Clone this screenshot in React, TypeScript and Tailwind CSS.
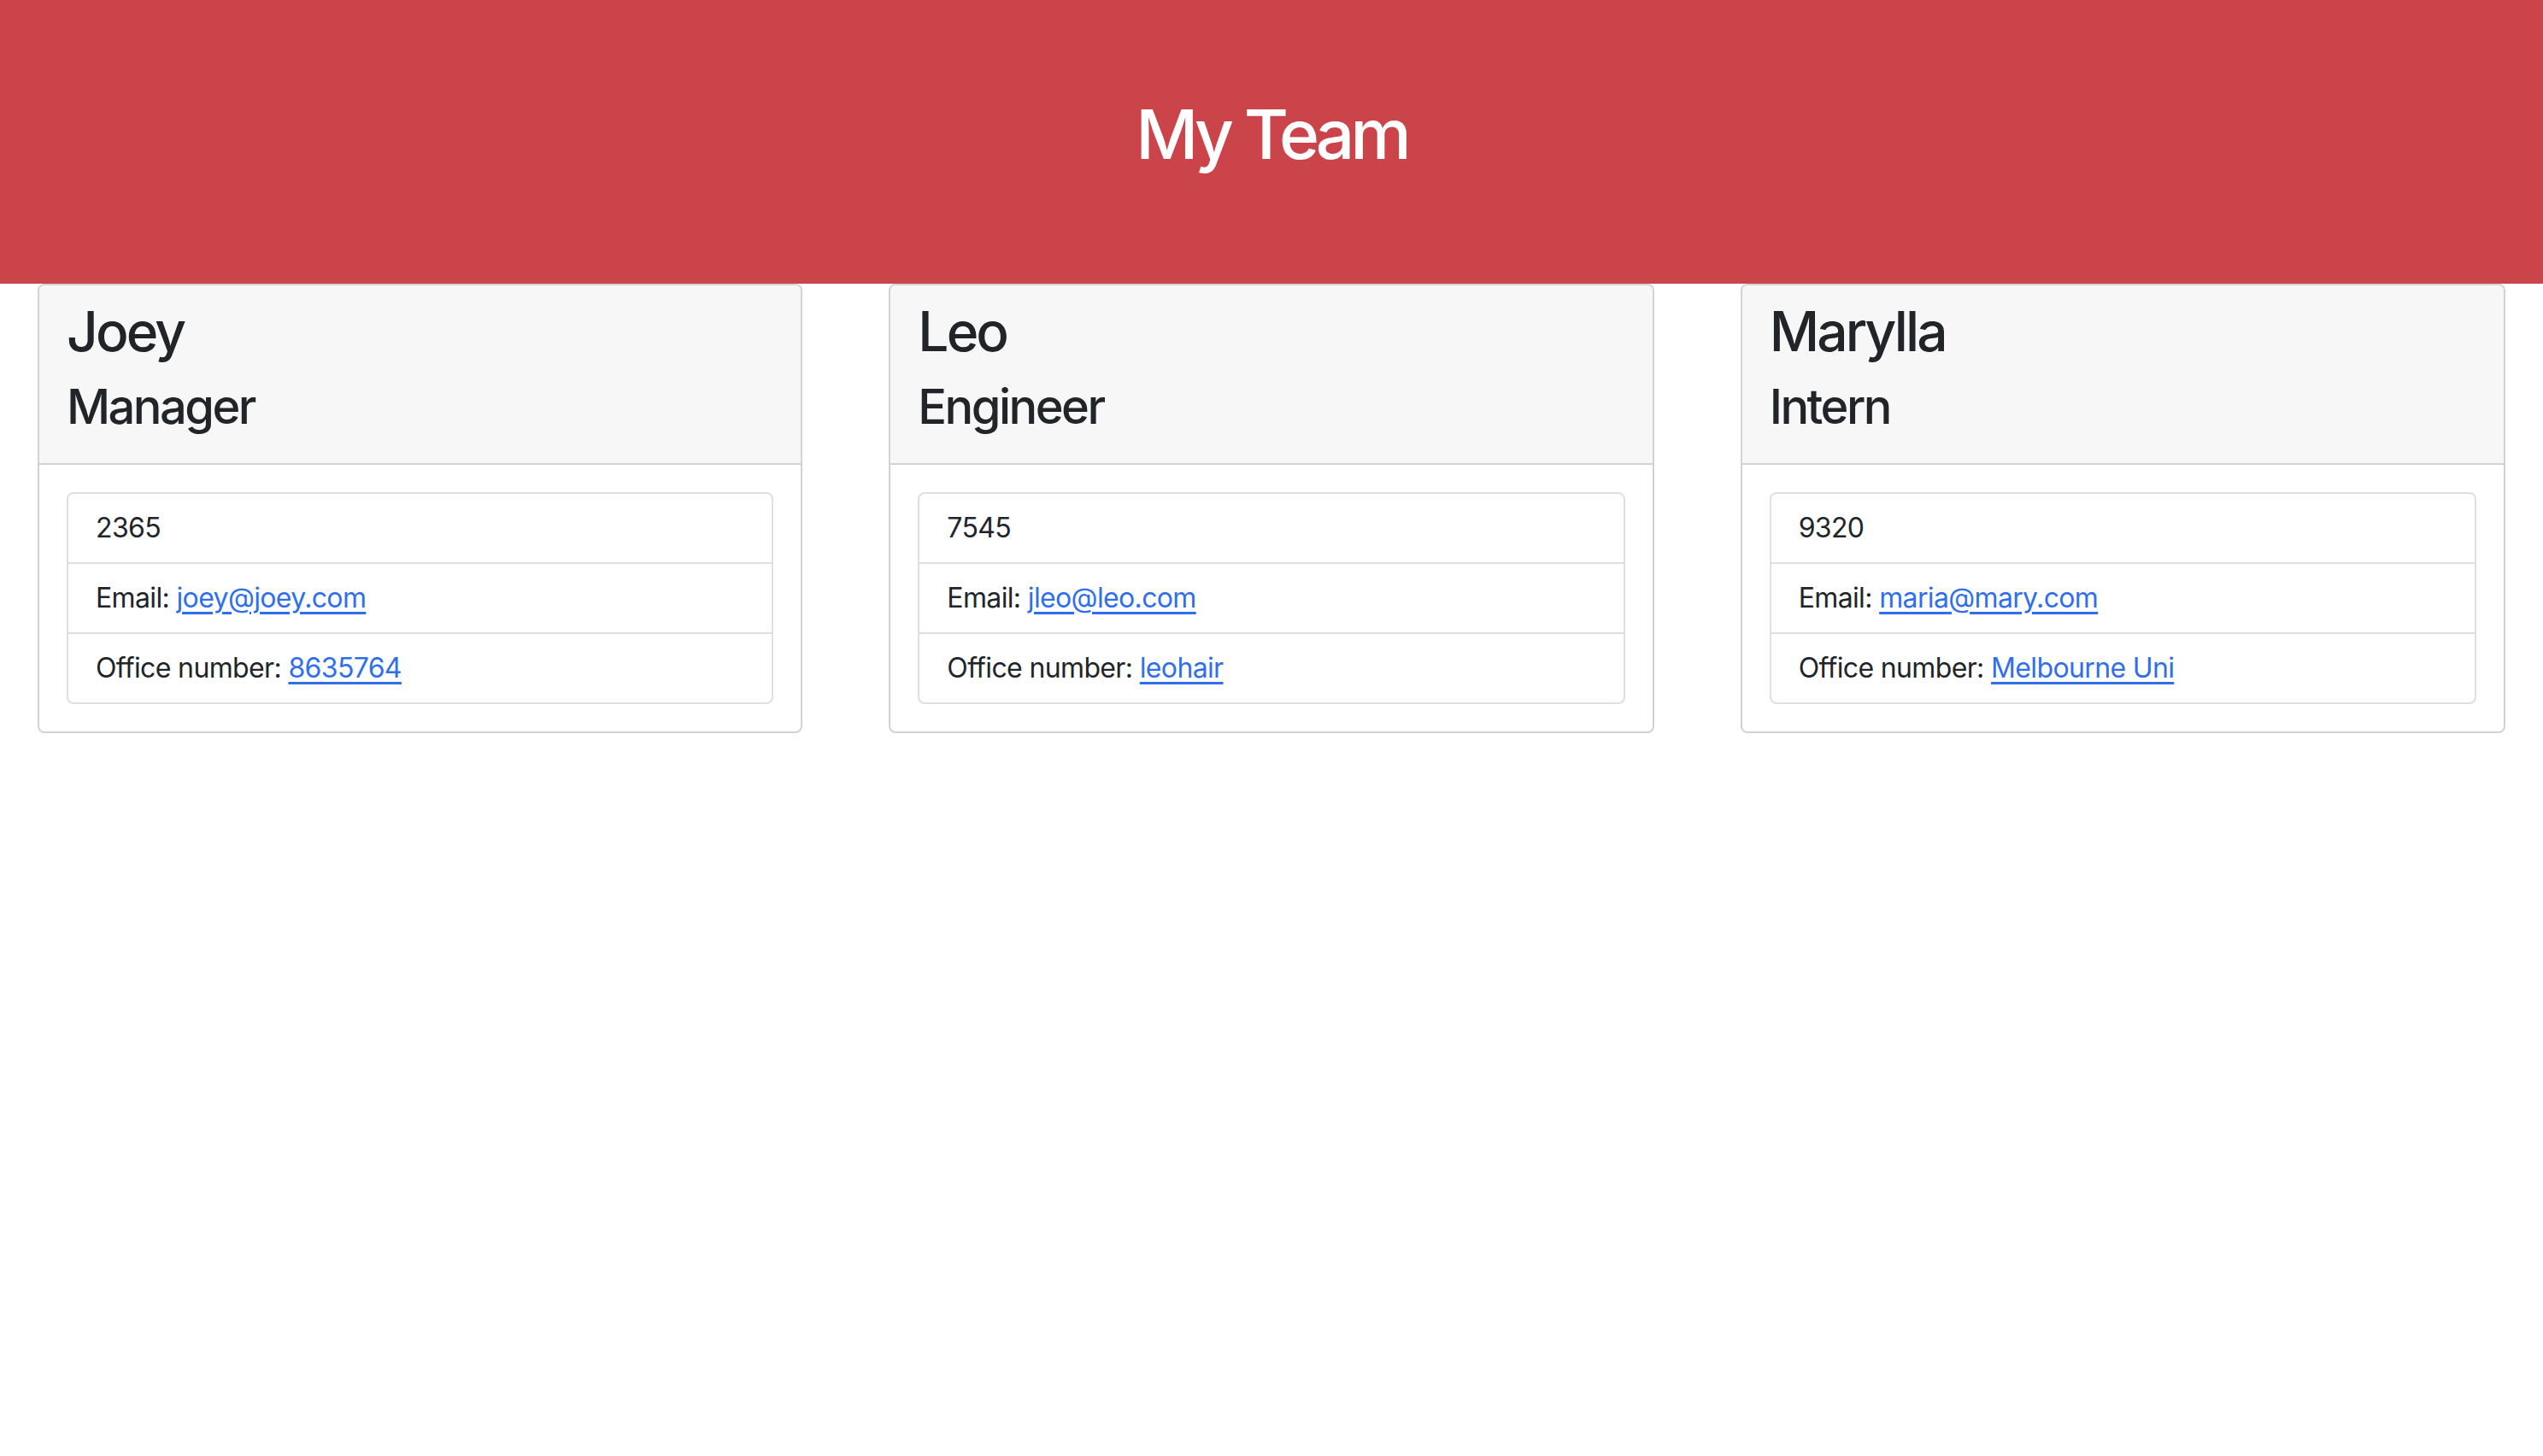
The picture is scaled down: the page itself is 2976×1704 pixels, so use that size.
type Member = {
  name: string;
  role: string;
  id: string;
  email: string;
  extra: string;
};

const team: Member[] = [
  { name: "Joey", role: "Manager", id: "2365", email: "joey@joey.com", extra: "8635764" },
  { name: "Leo", role: "Engineer", id: "7545", email: "jleo@leo.com", extra: "leohair" },
  { name: "Marylla", role: "Intern", id: "9320", email: "maria@mary.com", extra: "Melbourne Uni" },
];

function MemberCard({ member }: { member: Member }) {
  return (
    <div className="overflow-hidden rounded-[8px] border-2 border-[#d2d2d2] bg-white">
      <div className="border-b-2 border-[#d2d2d2] bg-[#f7f7f7] px-[32px] py-[16px]">
        <h2 className="mb-[16px] text-[64px] leading-[1.2] font-medium tracking-[-0.045em]">{member.name}</h2>
        <h3 className="mb-[16px] text-[56px] leading-[1.2] font-medium tracking-[-0.045em]">{member.role}</h3>
      </div>
      <div className="p-[32px]">
        <ul className="overflow-hidden rounded-[8px] border-2 border-[#dfdfdf] text-[32px] leading-[48px] tracking-[-0.02em]">
          <li className="px-[32px] py-[16px]">{member.id}</li>
          <li className="border-t-2 border-[#dfdfdf] px-[32px] py-[16px]">
            Email:{" "}
            <a href={`mailto:${member.email}`} className="text-[#2f6fee] underline underline-offset-[5px]">
              {member.email}
            </a>
          </li>
          <li className="border-t-2 border-[#dfdfdf] px-[32px] py-[16px]">
            Office number:{" "}
            <a href="#" className="text-[#2f6fee] underline underline-offset-[5px]">
              {member.extra}
            </a>
          </li>
        </ul>
      </div>
    </div>
  );
}

export default function App() {
  return (
    <div className="min-h-[1704px] bg-white text-[#212529] font-['Inter',sans-serif]">
      <header className="h-[332px] bg-[#cb444a] pt-[109px] text-center">
        <h1 className="text-[80px] leading-[1.2] font-medium tracking-[-0.06em] text-white">My Team</h1>
      </header>
      <main className="grid grid-cols-3 items-start gap-[101px] px-[44px]">
        {team.map((m) => (
          <MemberCard key={m.name} member={m} />
        ))}
      </main>
    </div>
  );
}
